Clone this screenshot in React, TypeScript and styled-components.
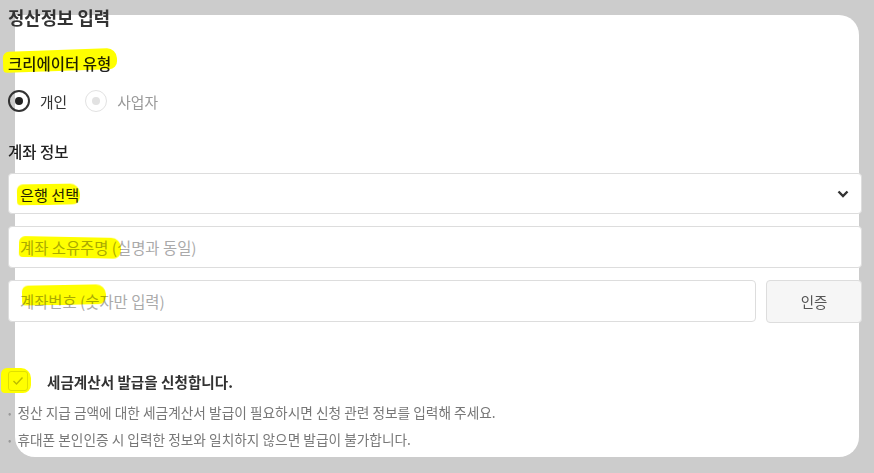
import styled, { createGlobalStyle } from 'styled-components';

const GlobalStyle = createGlobalStyle`
  body {
    margin: 0;
    background: #cccccc;
    font-family: 'Noto Sans CJK KR', 'Noto Sans', sans-serif;
    color: #333333;
  }
`;

const Page = styled.div`
  position: relative;
  box-sizing: border-box;
  width: 874px;
  height: 473px;
  padding: 7px 12px 0 8px;
  isolation: isolate;

  &::before {
    content: '';
    position: absolute;
    top: 15px;
    left: 15px;
    right: 15px;
    bottom: 16px;
    background: #ffffff;
    border-radius: 0 20px 20px 20px;
    z-index: -1;
  }
`;

const Title = styled.h1`
  margin: 0;
  font-size: 17.8px;
  line-height: 20px;
  font-weight: 700;
  color: #333333;
`;

const SectionLabel = styled.h2<{ $gap: number }>`
  position: relative;
  display: inline-block;
  align-self: flex-start;
  margin: ${(p) => p.$gap}px 0 0;
  font-size: 15.5px;
  line-height: 20px;
  font-weight: 500;
  color: #222222;
`;

const Highlight = styled.span<{ $x: number; $y: number; $w: number; $h: number; $tilt?: number }>`
  position: absolute;
  left: ${(p) => p.$x}px;
  top: ${(p) => p.$y}px;
  width: ${(p) => p.$w}px;
  height: ${(p) => p.$h}px;
  background: #ffff00;
  mix-blend-mode: multiply;
  border-radius: 6px 10px 8px 4px;
  transform: rotate(${(p) => p.$tilt ?? 0}deg);
  pointer-events: none;
`;

const Column = styled.div`
  display: flex;
  flex-direction: column;
`;

const RadioRow = styled.div`
  display: flex;
  align-items: center;
  gap: 10px;
  margin-top: 17px;
  height: 22px;
`;

const RadioOption = styled.label<{ $checked?: boolean }>`
  display: flex;
  align-items: center;
  gap: 10px;
  margin-right: 8px;
  font-size: 14.8px;
  color: ${(p) => (p.$checked ? '#333333' : '#999999')};
`;

const RadioCircle = styled.span<{ $checked?: boolean }>`
  box-sizing: border-box;
  width: 22px;
  height: 22px;
  border-radius: 50%;
  border: ${(p) => (p.$checked ? '2px solid #333333' : '1.5px solid #e2e2e2')};
  display: flex;
  align-items: center;
  justify-content: center;

  &::after {
    content: '';
    width: 8px;
    height: 8px;
    border-radius: 50%;
    background: ${(p) => (p.$checked ? '#222222' : '#e2e2e2')};
  }
`;

const Field = styled.div<{ $height?: number }>`
  position: relative;
  box-sizing: border-box;
  flex: 1 0 auto;
  height: ${(p) => p.$height ?? 42}px;
  border: 1px solid #dddddd;
  border-radius: 4px;
  background: #ffffff;
  display: flex;
  align-items: center;
  padding: 0 12px 0 11px;
  font-size: 15.4px;
`;

const SelectText = styled.span`
  flex: 1;
  color: #222222;
  font-size: 15.2px;
`;

const Placeholder = styled.span`
  color: #aaaaaa;
`;

const FieldStack = styled.div`
  display: flex;
  flex-direction: column;
  gap: 12px;
  margin-top: 12px;
`;

const FieldRow = styled.div`
  display: flex;
  gap: 10px;
`;

const VerifyButton = styled.button`
  box-sizing: border-box;
  width: 96px;
  height: 43px;
  border: 1px solid #dddddd;
  border-radius: 4px;
  background: #f6f6f6;
  color: #555555;
  font-family: inherit;
  font-size: 14.5px;
`;

const CheckRow = styled.div`
  position: relative;
  display: flex;
  align-items: center;
  gap: 19px;
  margin-top: 48px;
  height: 20px;
`;

const CheckBox = styled.span`
  box-sizing: border-box;
  width: 20px;
  height: 20px;
  border: 1px solid #e0e0e0;
  border-radius: 3px;
  display: flex;
  align-items: center;
  justify-content: center;
`;

const CheckLabel = styled.span`
  font-size: 14.6px;
  font-weight: 700;
  color: #333333;
`;

const Notes = styled.ul`
  list-style: none;
  margin: 8px 0 0;
  padding: 0;
`;

const Note = styled.li`
  display: flex;
  gap: 6px;
  font-size: 13.7px;
  line-height: 27px;
  color: #777777;

  &::before {
    content: '•';
    color: #999999;
    font-size: 10px;
  }
`;

export default function App() {
  return (
    <>
      <GlobalStyle />
      <Page>
        <Column>
          <Title>정산정보 입력</Title>

          <SectionLabel $gap={26}>
            크리에이터 유형
            <Highlight $x={-5} $y={-3} $w={114} $h={21} $tilt={-2} />
          </SectionLabel>

          <RadioRow>
            <RadioOption $checked>
              <RadioCircle $checked />
              개인
            </RadioOption>
            <RadioOption>
              <RadioCircle />
              사업자
            </RadioOption>
          </RadioRow>

          <SectionLabel $gap={29}>계좌 정보</SectionLabel>

          <FieldStack>
            <Field $height={41}>
              <SelectText>은행 선택</SelectText>
              <svg width="12" height="8" viewBox="0 0 12 8">
                <path d="M1.5 1.5 6 6l4.5-4.5" fill="none" stroke="#333" strokeWidth="2.4" />
              </svg>
              <Highlight $x={8} $y={10} $w={63} $h={21} $tilt={-1} />
            </Field>
            <Field>
              <Placeholder>계좌 소유주명 (실명과 동일)</Placeholder>
              <Highlight $x={10} $y={10} $w={102} $h={21} $tilt={1} />
            </Field>
            <FieldRow>
              <Field>
                <Placeholder>계좌번호 (숫자만 입력)</Placeholder>
                <Highlight $x={13} $y={4} $w={84} $h={20} $tilt={-1} />
              </Field>
              <VerifyButton>인증</VerifyButton>
            </FieldRow>
          </FieldStack>

          <CheckRow>
            <CheckBox>
              <svg width="12" height="10" viewBox="0 0 12 10">
                <path d="M1.5 5 4.5 8 10.5 1.5" fill="none" stroke="#bbbbbb" strokeWidth="1.4" />
              </svg>
            </CheckBox>
            <CheckLabel>세금계산서 발급을 신청합니다.</CheckLabel>
            <Highlight $x={-7} $y={-3} $w={30} $h={25} />
          </CheckRow>

          <Notes>
            <Note>정산 지급 금액에 대한 세금계산서 발급이 필요하시면 신청 관련 정보를 입력해 주세요.</Note>
            <Note>휴대폰 본인인증 시 입력한 정보와 일치하지 않으면 발급이 불가합니다.</Note>
          </Notes>
        </Column>
      </Page>
    </>
  );
}
